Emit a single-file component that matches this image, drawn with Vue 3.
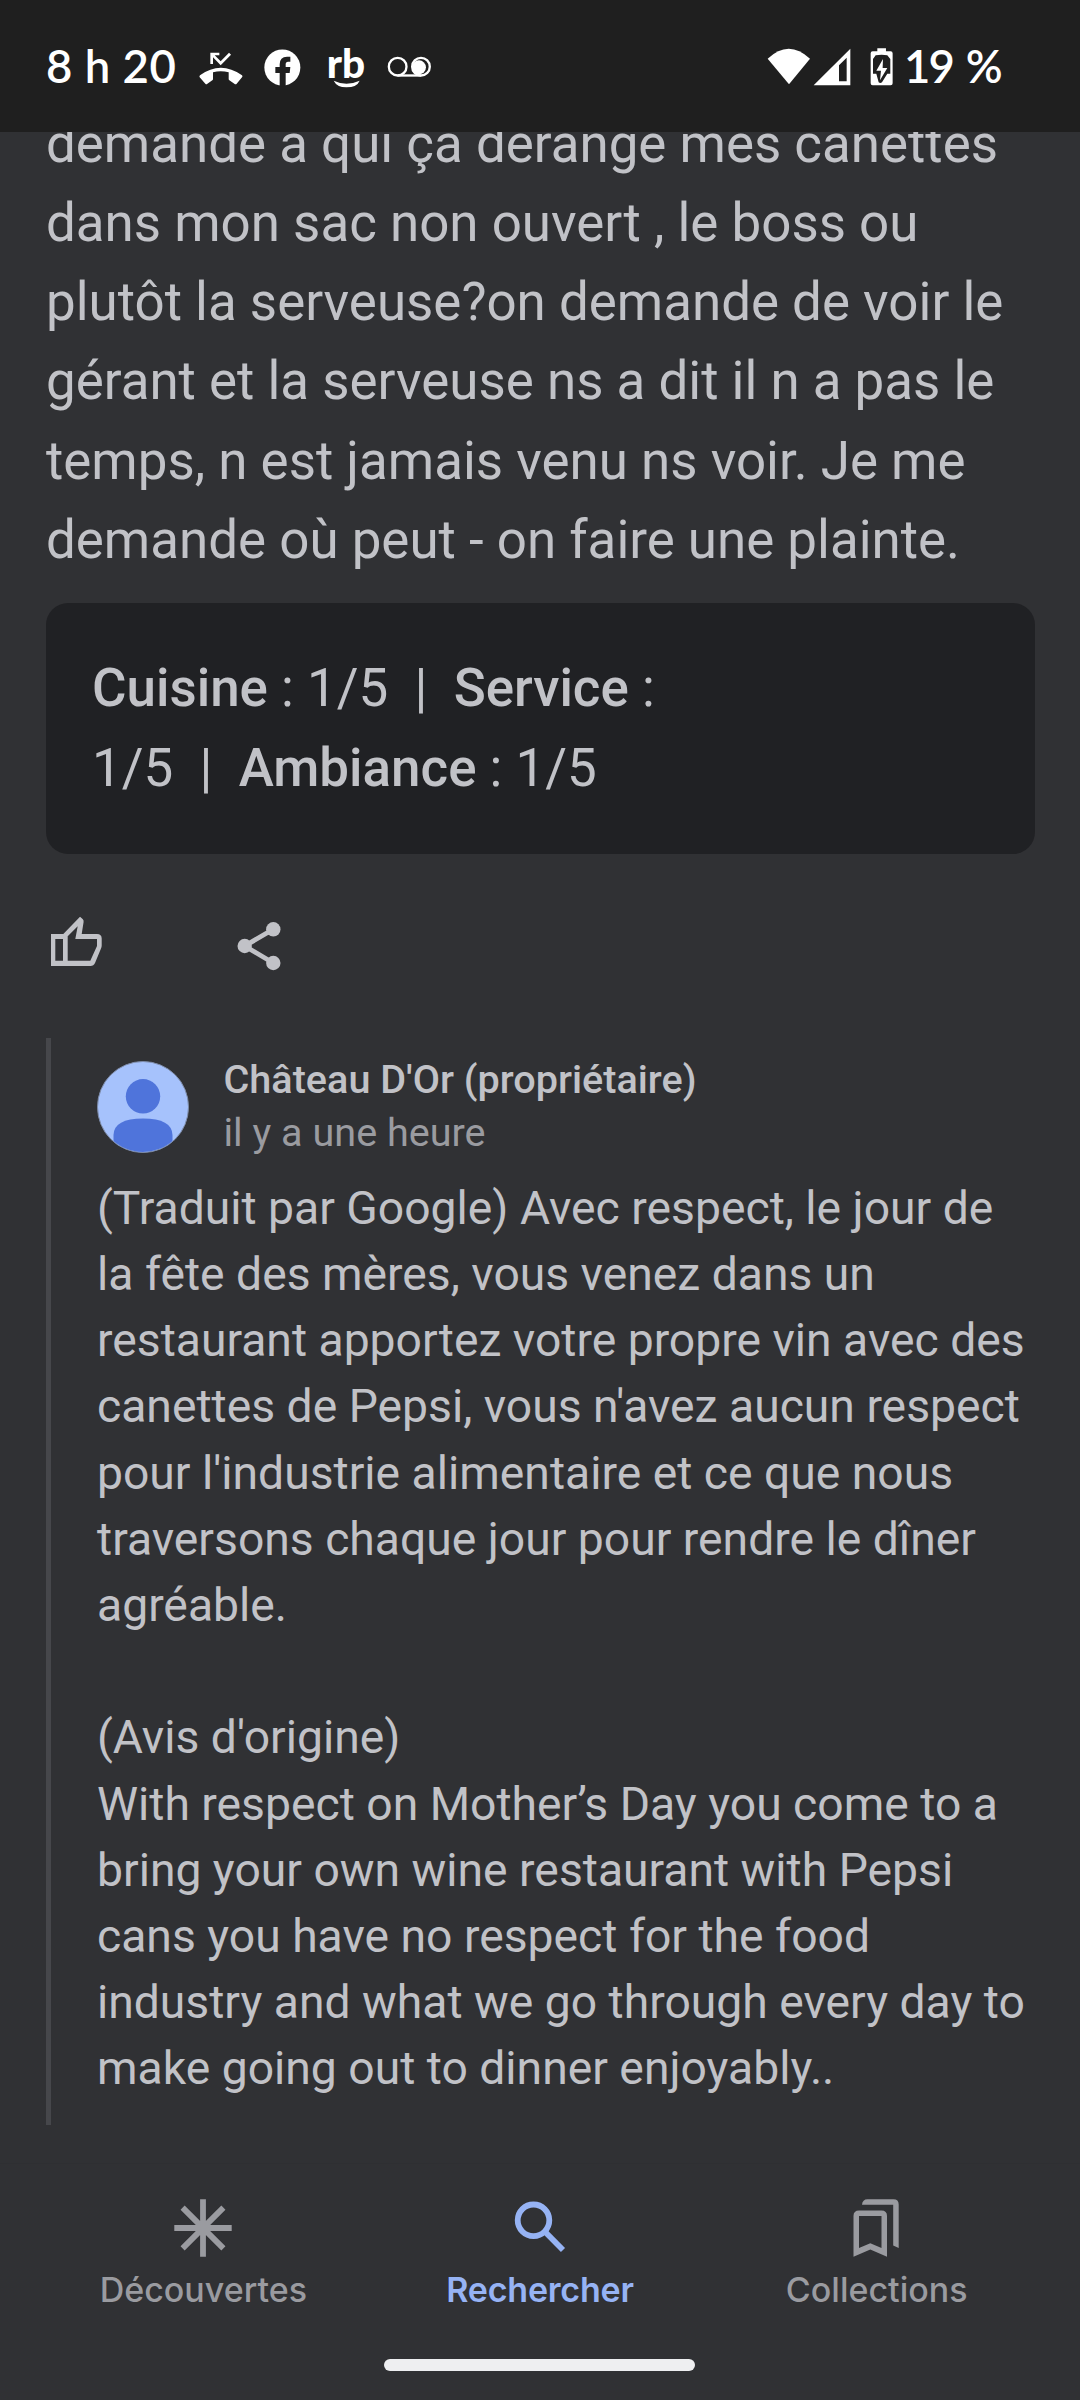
<script setup>
const review = [
  'demande à qui ça dérange mes canettes',
  'dans mon sac non ouvert , le boss ou',
  'plutôt la serveuse?on demande de voir le',
  'gérant et la serveuse ns a dit il n a pas le',
  'temps, n est jamais venu ns voir. Je me',
  'demande où peut - on faire une plainte.'
].join('\n')

const reply = [
  '(Traduit par Google) Avec respect, le jour de',
  'la fête des mères, vous venez dans un',
  'restaurant apportez votre propre vin avec des',
  "canettes de Pepsi, vous n'avez aucun respect",
  "pour l'industrie alimentaire et ce que nous",
  'traversons chaque jour pour rendre le dîner',
  'agréable.',
  '',
  "(Avis d'origine)",
  'With respect on Mother’s Day you come to a',
  'bring your own wine restaurant with Pepsi',
  'cans you have no respect for the food',
  'industry and what we go through every day to',
  'make going out to dinner enjoyably..'
].join('\n')
</script>

<template>
  <div class="screen">
    <header class="status">
      <span class="time">8 h 20</span>
      <div class="notifications">
        <svg class="call" viewBox="20 50 140 120" fill="#fff">
          <path d="M57 67H84V75H70L88 93L113 67L119 73L88 105L65 81V101H57Z" />
          <path d="M26 135Q88 90 152 135Q155 138 152 141L136 160Q133 163 129 160L114 150Q112 148 112 146V126Q88 119 65 126V146Q65 148 63 150L48 160Q45 163 42 160L25 141Q23 138 26 135Z" />
        </svg>
        <svg class="fb" viewBox="218 50 116 120">
          <circle cx="276" cy="111.500" r="54" fill="#fff" />
          <path d="M268 168V128H255V110H268V102Q268 79 290 79H300V94H293Q286 94 286 102V110H300L298 128H286V168Z" fill="#1f1f1f" />
        </svg>
        <svg class="rb" viewBox="408 50 116 120" fill="#fff">
          <text x="407" y="143" textLength="115" lengthAdjust="spacingAndGlyphs">rb</text>
          <path d="M428 151Q466 169 506 151Q498 171 466 171Q438 171 428 151Z" />
        </svg>
        <svg class="voicemail" viewBox="588 50 136 120">
          <g fill="none" stroke="#fff" stroke-width="7">
            <circle cx="620" cy="109" r="26.500" />
            <circle cx="690" cy="109" r="26.500" />
            <path d="M620 135.500H690" />
          </g>
          <circle cx="684" cy="111" r="21" fill="#fff" />
        </svg>
      </div>
      <div class="system">
        <svg class="wifi" viewBox="200 140 132 120" fill="#fff"><path d="M202 175Q265 115 329 175L266 252Z" /></svg>
        <svg class="signal" viewBox="338 140 114 120" fill="#fff"><path fill-rule="evenodd" d="M340 255L450 145V255ZM416 195V243H439V172Z" /></svg>
        <svg class="battery" viewBox="508 140 70 120">
          <path d="M530 144H556V153H570Q576 153 576 159V249Q576 255 570 255H516Q510 255 510 249V159Q510 153 516 153H530Z" fill="#fff" />
          <path d="M525 165Q543 161 560 165L569 176V220H560L544 246Q539 250 534 246L527 220H517V176Z" fill="#1f1f1f" />
          <path d="M547 176L527 211H541L538 240L560 203H546Z" fill="#fff" />
        </svg>
        <span class="percent">19 %</span>
      </div>
    </header>

    <main class="content">
      <p class="review">{{ review }}</p>
      <div class="ratings">
        <p><b>Cuisine</b> : 1/5&nbsp; |&nbsp; <b>Service</b> :</p>
        <p>1/5&nbsp; |&nbsp; <b>Ambiance</b> : 1/5</p>
      </div>
      <div class="actions">
        <svg viewBox="0 0 56 56">
          <path fill="#c1c2c7" fill-rule="evenodd" d="M3 20H15.300L32 2.800L34.600 5Q35.900 6.200 35.600 8L33.700 20H49Q53.700 20 53.700 24.500V31.500Q53.700 33 53 34.500L47 49Q45.700 52 42.500 52H3ZM7.300 25V46.700H15V25ZM19.700 22.300V46.700H42.300L49 32V25H27.300L29.700 12.300Z" />
        </svg>
        <svg viewBox="0 0 56 56">
          <path d="M41.300 15.300L12.700 32L41.300 49" fill="none" stroke="#c1c2c7" stroke-width="4.800" />
          <g fill="#c1c2c7"><circle cx="41.300" cy="15.300" r="7.200" /><circle cx="12.700" cy="32" r="7.200" /><circle cx="41.300" cy="49" r="7.200" /></g>
        </svg>
      </div>
      <section class="reply">
        <div class="owner">
          <svg class="avatar" viewBox="0 0 92 92">
            <defs><clipPath id="disc"><circle cx="46" cy="46" r="45" /></clipPath></defs>
            <circle cx="46" cy="46" r="45.500" fill="#a6c2fc" stroke="#7d8ba8" stroke-width="1" />
            <g fill="#4f74db" clip-path="url(#disc)">
              <circle cx="46" cy="35.300" r="17.200" />
              <path d="M16.500 92V74Q17 57.500 46 57.500Q75 57.500 75.500 74V92Z" />
            </g>
          </svg>
          <div class="who">
            <div class="name">Château D'Or (propriétaire)</div>
            <div class="when">il y a une heure</div>
          </div>
        </div>
        <p class="reply-text">{{ reply }}</p>
      </section>
    </main>

    <nav class="nav">
      <div class="tabs">
        <div class="tab">
          <svg viewBox="0 0 58 58" stroke="#9a9ba0" stroke-width="5.800"><path d="M29 .300V57.700M.300 29H57.700M8.600 8.600L49.400 49.400M49.400 8.600L8.600 49.400" /></svg>
          <span>Découvertes</span>
        </div>
        <div class="tab active">
          <svg viewBox="0 0 58 58" fill="none" stroke="#96b3f4" stroke-width="5.800"><circle cx="22.500" cy="21.300" r="15.800" /><path d="M33.500 32.300L52 51" /></svg>
          <span>Rechercher</span>
        </div>
        <div class="tab">
          <svg viewBox="0 0 58 58" fill="#9a9ba0">
            <path fill-rule="evenodd" d="M5.500 57.700V17Q5.500 11.500 11 11.500H33.500Q39 11.500 39 17V57.700L22.300 50.500ZM11 49L22.300 44.300L33.500 49V17H11Z" />
            <path d="M14 5.700Q14.500 .200 19.500 .200H45.500Q50.700 .200 50.700 5.500V49L45.200 46.500V5.700Z" />
          </svg>
          <span>Collections</span>
        </div>
      </div>
      <div class="home"></div>
    </nav>
  </div>
</template>

<style>
body { background: #303134; }
</style>

<style scoped>
.screen {
  width: 1080px;
  height: 2400px;
  display: flex;
  flex-direction: column;
  overflow: hidden;
  background: #303134;
  color: #c1c2c7;
  font-family: Roboto, sans-serif;
}
p { margin: 0; }
svg { display: block; flex: none; overflow: visible; }
.status {
  flex: none;
  height: 132px;
  box-sizing: border-box;
  padding: 46.7px 0 0 46px;
  display: flex;
  align-items: flex-start;
  background: #1f1f1f;
  color: #fff;
  font: 600 45.5px/37.4px Lato, sans-serif;
  white-space: nowrap;
}
.status svg { height: 40px; }
.time { width: 151.5px; letter-spacing: 0.5px; }
.notifications { display: flex; }
.call { width: 46.7px; }
.fb { width: 38.7px; margin-left: 19.3px; }
.rb { width: 38.7px; margin-left: 24.7px; }
.rb text { font: 900 122px Lato, sans-serif; }
.voicemail { width: 45.3px; margin-left: 21.3px; }
.system { display: flex; margin-left: 335px; }
.wifi { width: 44px; }
.signal { width: 38px; margin-left: 2px; }
.battery { width: 23.3px; margin-left: 18.6px; }
.percent { margin-left: 11px; letter-spacing: -1.8px; word-spacing: 3px; }

.content {
  flex: none;
  height: 2031px;
  padding: 0 45px 0 46px;
  overflow: hidden;
}
.review {
  margin-top: -27.3px;
  font-size: 52.9px;
  line-height: 79.25px;
  white-space: pre;
}
.ratings {
  height: 251px;
  margin-top: 22.8px;
  box-sizing: border-box;
  padding: 46px;
  border-radius: 22px;
  background: #202124;
  font-size: 52.9px;
  line-height: 79.6px;
  white-space: pre;
}
.ratings b { font-weight: 500; }
.actions {
  height: 184px;
  box-sizing: border-box;
  padding: 60px 0 0 2px;
  display: flex;
  gap: 128px;
}
.actions svg { width: 56px; height: 56px; }
.reply {
  height: 1087px;
  box-sizing: border-box;
  border-left: 5px solid #46474b;
  padding: 23px 0 0 46px;
}
.owner { height: 92px; display: flex; align-items: center; gap: 34.5px; }
.avatar { width: 92px; height: 92px; }
.who { margin-top: -2px; font-size: 39.6px; line-height: 53px; white-space: nowrap; }
.name { font-weight: 500; }
.when { color: #9a9ba0; }
.reply-text {
  margin: 21.8px 0 0;
  font-size: 46.25px;
  line-height: 66.2px;
  white-space: pre;
}

.nav { flex: 1; border-top: 1px solid #2e2f32; }
.tabs { display: flex; padding: 35px 35px 0; }
.tab {
  flex: 1;
  display: flex;
  flex-direction: column;
  align-items: center;
  color: #9a9ba0;
  font: 500 34px/40px Inter, sans-serif;
}
.tab svg { width: 58px; height: 58px; }
.tab span { margin-top: 12.6px; }
.active { color: #96b3f4; font-weight: 600; letter-spacing: -0.2px; }
.home {
  width: 311px;
  height: 12px;
  margin: 49.8px 0 0 384px;
  border-radius: 6px;
  background: #eeeff1;
}
</style>
